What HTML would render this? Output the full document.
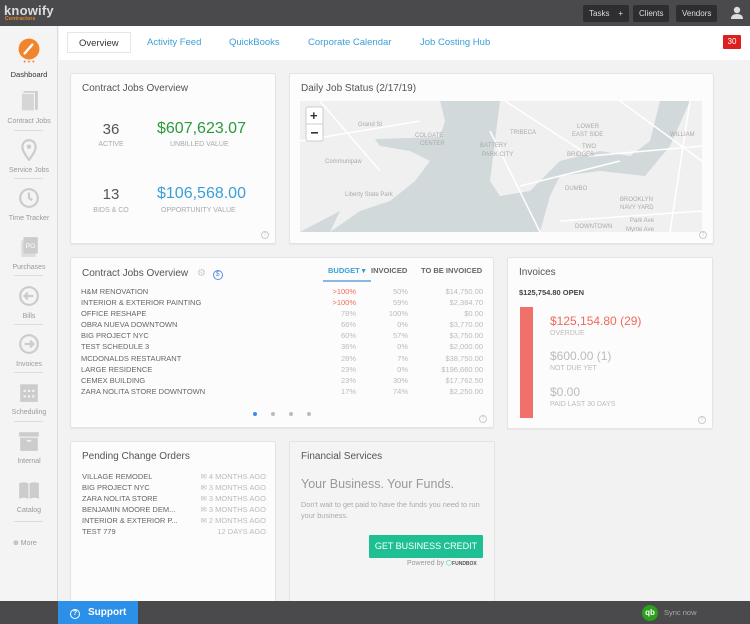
<!DOCTYPE html>
<html><head><meta charset="utf-8"><style>
*{box-sizing:border-box;margin:0;padding:0}
body{width:750px;height:624px;overflow:hidden;font-family:"Liberation Sans",sans-serif;background:#f2f2f2;position:relative;color:#555}
.top{position:absolute;left:0;top:0;width:750px;height:26px;background:#4a4a4c}
.logo{position:absolute;left:4px;top:3px;color:#ddd;font-size:13px;font-weight:bold;letter-spacing:.2px}
.logo small{position:absolute;left:1px;top:13px;font-size:5px;color:#e58a2a;font-weight:bold}
.tb{position:absolute;top:5px;height:17px;background:#2e2e30;color:#ddd;font-size:8px;line-height:17px;padding:0 6px;border-radius:2px;white-space:nowrap}
.side{position:absolute;left:0;top:26px;width:58px;height:575px;background:#f4f4f4;border-right:1px solid #ddd}
.si{position:absolute;left:0;width:58px;text-align:center;font-size:7px;color:#999}
.si .ic{display:block;margin:0 auto 6px;width:22px;height:22px}
.sep{position:absolute;left:14px;width:29px;height:1px;background:#ddd}
.tabs{position:absolute;left:59px;top:26px;width:691px;height:34px;background:#fff}
.tab{position:absolute;top:6px;height:21px;line-height:21px;font-size:9.5px;color:#3a9fd8}
.card{position:absolute;background:#fcfcfc;border:1px solid #e4e4e4;border-radius:2px;box-shadow:0 1px 1px rgba(0,0,0,.05)}
.ct{position:absolute;left:11px;top:9px;font-size:10px;color:#555}
.q{position:absolute;right:6px;bottom:4px;width:8px;height:8px;border:1px solid #ccc;border-radius:50%;font-size:5px;color:#ccc;text-align:center;line-height:6px}
.row{position:absolute;font-size:7.5px;color:#666;white-space:nowrap}
.g{color:#bbb}
.bot{position:absolute;left:0;top:601px;width:750px;height:23px;background:#4a4a4c}
</style></head><body>
<div class="top">
 <div class="logo">knowify<small>Contractors</small></div>
 <div class="tb" style="left:583px">Tasks &nbsp;&nbsp;&nbsp;+</div>
 <div class="tb" style="left:633px">Clients</div>
 <div class="tb" style="left:676px">Vendors</div>
 <svg style="position:absolute;left:731px;top:6px" width="12" height="13"><circle cx="6" cy="4" r="3.2" fill="#ddd"/><path d="M0 13 Q0 8 6 8 Q12 8 12 13Z" fill="#ddd"/></svg>
</div>
<div class="side">
 <div class="si" style="top:12px;color:#333"><svg class="ic" viewBox="0 0 20 20" style="width:22px;height:22px;margin-bottom:0"><circle cx="10" cy="10" r="9.5" fill="#f0852b"/><path d="M6 14 L13 6" stroke="#fff" stroke-width="2.2" stroke-linecap="round"/></svg>
 <div style="color:#f0852b;font-size:7px;line-height:6px">• • •</div><div style="margin-top:4px;font-size:7.5px">Dashboard</div></div>
 <div class="si" style="top:64px"><svg class="ic" viewBox="0 0 20 20"><rect x="5" y="1" width="13" height="17" fill="#ccc"/><rect x="3" y="3" width="12" height="16" fill="#d6d6d6" stroke="#f4f4f4"/></svg>Contract Jobs</div>
 <div class="sep" style="top:104px"></div>
 <div class="si" style="top:113px"><svg class="ic" viewBox="0 0 20 20"><path d="M10 19 C4 11 4 9 4 7 A6 6 0 0 1 16 7 C16 9 16 11 10 19Z" fill="none" stroke="#ccc" stroke-width="2"/><circle cx="10" cy="7" r="2" fill="#ccc"/></svg>Service Jobs</div>
 <div class="sep" style="top:152px"></div>
 <div class="si" style="top:161px"><svg class="ic" viewBox="0 0 20 20"><circle cx="10" cy="10" r="8" fill="none" stroke="#ccc" stroke-width="2"/><path d="M10 5V10L13 12" stroke="#ccc" stroke-width="2" fill="none"/></svg>Time Tracker</div>
 <div class="si" style="top:210px"><svg class="ic" viewBox="0 0 20 20"><rect x="3" y="4" width="13" height="15" fill="#ddd"/><rect x="5" y="1" width="13" height="15" fill="#ccc"/><text x="7" y="11" font-size="6" fill="#fff" font-family="Liberation Sans">PO</text></svg>Purchases</div>
 <div class="sep" style="top:249px"></div>
 <div class="si" style="top:259px"><svg class="ic" viewBox="0 0 20 20"><circle cx="10" cy="10" r="8" fill="none" stroke="#ccc" stroke-width="2"/><path d="M14 10H6M9 7L6 10L9 13" stroke="#ccc" stroke-width="2" fill="none"/></svg>Bills</div>
 <div class="sep" style="top:298px"></div>
 <div class="si" style="top:307px"><svg class="ic" viewBox="0 0 20 20"><circle cx="10" cy="10" r="8" fill="none" stroke="#ccc" stroke-width="2"/><path d="M6 10H14M11 7L14 10L11 13" stroke="#ccc" stroke-width="2" fill="none"/></svg>Invoices</div>
 <div class="sep" style="top:346px"></div>
 <div class="si" style="top:355px"><svg class="ic" viewBox="0 0 20 20"><rect x="2" y="3" width="16" height="16" fill="#ccc"/><g fill="#f4f4f4"><rect x="5" y="8" width="2" height="2"/><rect x="9" y="8" width="2" height="2"/><rect x="13" y="8" width="2" height="2"/><rect x="5" y="13" width="2" height="2"/><rect x="9" y="13" width="2" height="2"/><rect x="13" y="13" width="2" height="2"/></g></svg>Scheduling</div>
 <div class="sep" style="top:395px"></div>
 <div class="si" style="top:404px"><svg class="ic" viewBox="0 0 20 20"><rect x="1" y="2" width="18" height="4" fill="#ccc"/><rect x="2" y="7" width="16" height="12" fill="#ccc"/><rect x="8" y="9" width="4" height="1.5" fill="#f4f4f4"/></svg>Internal</div>
 <div class="si" style="top:453px"><svg class="ic" viewBox="0 0 20 20"><path d="M1 4Q5 2 9.5 4V18Q5 16 1 18Z M10.5 4Q15 2 19 4V18Q15 16 10.5 18Z" fill="#ccc"/></svg>Catalog</div>
 <div class="sep" style="top:495px"></div>
 <div class="si" style="top:513px;text-align:left;padding-left:13px">⊕ More</div>
</div>
<div class="tabs">
 <div class="tab" style="left:8px;border:1px solid #e6e6e6;color:#333;padding:0 11px">Overview</div>
 <div class="tab" style="left:88px">Activity Feed</div>
 <div class="tab" style="left:170px">QuickBooks</div>
 <div class="tab" style="left:249px">Corporate Calendar</div>
 <div class="tab" style="left:361px">Job Costing Hub</div>
 <div style="position:absolute;left:664px;top:9px;width:18px;height:14px;background:#dd1f1f;color:#fff;font-size:8px;text-align:center;line-height:14px;border-radius:1px">30</div>
</div>

<div class="card" style="left:70px;top:73px;width:206px;height:171px">
 <div class="ct">Contract Jobs Overview</div>
 <div style="position:absolute;left:0;width:80px;top:47px;text-align:center;font-size:15px;color:#555">36</div>
 <div style="position:absolute;left:0;width:80px;top:67px;text-align:center;font-size:7px;color:#aaa">ACTIVE</div>
 <div style="position:absolute;left:86px;top:46px;font-size:16px;color:#2a9a3a">$607,623.07</div>
 <div style="position:absolute;left:99px;top:67px;font-size:7px;color:#aaa">UNBILLED VALUE</div>
 <div style="position:absolute;left:0;width:80px;top:112px;text-align:center;font-size:15px;color:#555">13</div>
 <div style="position:absolute;left:0;width:80px;top:133px;text-align:center;font-size:7px;color:#aaa">BIDS &amp; CO</div>
 <div style="position:absolute;left:86px;top:111px;font-size:16px;color:#3a9fd8">$106,568.00</div>
 <div style="position:absolute;left:90px;top:133px;font-size:7px;color:#aaa">OPPORTUNITY VALUE</div>
 <div class="q">?</div>
</div>

<div class="card" style="left:289px;top:73px;width:425px;height:171px">
 <div class="ct">Daily Job Status (2/17/19)</div>
 <svg style="position:absolute;left:10px;top:27px" width="402" height="131" viewBox="0 0 402 131">
  <rect width="402" height="131" fill="#f0f0f0"/>
  <path d="M30 131 L60 110 L90 100 L115 80 L130 60 L110 50 L80 45 L75 38 L140 36 L145 20 L140 0 L200 0 L195 40 L190 80 L200 95 L230 90 L260 60 L300 50 L330 55 L350 40 L360 0 L390 0 L370 45 L345 75 L300 70 L260 75 L250 95 L240 131Z" fill="#d2d9da"/>
  <path d="M0 131 L40 110 L30 131Z" fill="#d2d9da"/>
  <g stroke="#fff" stroke-width="1.5" fill="none">
   <path d="M0 40 L120 20"/><path d="M20 0 L80 70"/><path d="M190 30 L240 131"/><path d="M205 0 L290 55 L402 45"/><path d="M320 0 L402 60"/><path d="M260 120 L402 110"/><path d="M390 0 L370 131"/><path d="M220 85 L320 60"/>
  </g>
  <g font-family="Liberation Sans" font-size="6" fill="#aaa">
   <text x="58" y="25">Grand St</text><text x="115" y="36">COLGATE</text><text x="120" y="44">CENTER</text>
   <text x="180" y="46">BATTERY</text><text x="182" y="55">PARK CITY</text><text x="210" y="33">TRIBECA</text>
   <text x="277" y="27">LOWER</text><text x="272" y="35">EAST SIDE</text><text x="282" y="47">TWO</text><text x="267" y="55">BRIDGES</text>
   <text x="370" y="35">WILLIAM</text><text x="25" y="62">Communipaw</text><text x="45" y="95">Liberty State Park</text>
   <text x="265" y="89">DUMBO</text><text x="320" y="100">BROOKLYN</text><text x="320" y="108">NAVY YARD</text>
   <text x="330" y="121">Park Ave</text><text x="275" y="127">DOWNTOWN</text><text x="326" y="130">Myrtle Ave</text>
  </g>
  <rect x="6" y="6" width="17" height="34" rx="2" fill="#fff" stroke="#ccc"/><line x1="6" y1="23" x2="23" y2="23" stroke="#ccc"/>
  <text x="10" y="19" font-size="13" font-weight="bold" fill="#333" font-family="Liberation Sans">+</text>
  <rect x="11" y="31" width="7" height="1.6" fill="#333"/>
 </svg>
 <div class="q">?</div>
</div>

<div class="card" style="left:70px;top:257px;width:424px;height:171px">
 <div class="ct" style="top:10px">Contract Jobs Overview <span style="color:#ccc;margin-left:6px">⚙</span> <span style="display:inline-block;width:10px;height:10px;border:1px solid #5a8fe0;border-radius:50%;color:#5a8fe0;font-size:7px;text-align:center;line-height:8px;margin-left:4px">$</span></div>
 <div class="row" style="left:252px;top:8px;color:#3a9fd8;font-weight:bold;font-size:7.5px;border-bottom:2px solid #8ab8e0;padding:0 5px 5px">BUDGET ▾</div>
 <div class="row" style="left:300px;top:8px;font-weight:bold;font-size:7.5px;color:#666">INVOICED</div>
 <div class="row" style="left:350px;top:8px;font-weight:bold;font-size:7.5px;color:#666">TO BE INVOICED</div>
 <div style="position:absolute;left:10px;top:28px;width:402px;font-size:7.5px;line-height:11.1px;color:#666">
  <div style="position:relative">
  <div>H&amp;M RENOVATION</div><div>INTERIOR &amp; EXTERIOR PAINTING</div><div>OFFICE RESHAPE</div><div>OBRA NUEVA DOWNTOWN</div><div>BIG PROJECT NYC</div><div>TEST SCHEDULE 3</div><div>MCDONALDS RESTAURANT</div><div>LARGE RESIDENCE</div><div>CEMEX BUILDING</div><div>ZARA NOLITA STORE DOWNTOWN</div>
  <div style="position:absolute;right:127px;top:0;text-align:right;color:#bbb"><div style="color:#f06a5a">&gt;100%</div><div style="color:#f06a5a">&gt;100%</div><div>78%</div><div>66%</div><div>60%</div><div>36%</div><div>28%</div><div>23%</div><div>23%</div><div>17%</div></div>
  <div style="position:absolute;right:75px;top:0;text-align:right;color:#bbb"><div>50%</div><div>59%</div><div>100%</div><div>0%</div><div>57%</div><div>0%</div><div>7%</div><div>0%</div><div>30%</div><div>74%</div></div>
  <div style="position:absolute;right:0;top:0;text-align:right;color:#bbb"><div>$14,750.00</div><div>$2,384.70</div><div>$0.00</div><div>$3,770.00</div><div>$3,750.00</div><div>$2,000.00</div><div>$38,750.00</div><div>$196,660.00</div><div>$17,762.50</div><div>$2,250.00</div></div>
  </div>
 </div>
 <div style="position:absolute;left:182px;top:154px;width:4px;height:4px;border-radius:50%;background:#3a8ee0"></div>
 <div style="position:absolute;left:200px;top:154px;width:4px;height:4px;border-radius:50%;background:#bbb"></div>
 <div style="position:absolute;left:218px;top:154px;width:4px;height:4px;border-radius:50%;background:#bbb"></div>
 <div style="position:absolute;left:236px;top:154px;width:4px;height:4px;border-radius:50%;background:#bbb"></div>
 <div class="q">?</div>
</div>

<div class="card" style="left:507px;top:257px;width:206px;height:172px">
 <div class="ct">Invoices</div>
 <div style="position:absolute;left:11px;top:30px;font-size:7.5px;font-weight:bold;color:#444">$125,754.80 OPEN</div>
 <div style="position:absolute;left:12px;top:49px;width:13px;height:111px;background:#f2706a"></div>
 <div style="position:absolute;left:42px;top:56px;font-size:12px;color:#f06a5a">$125,154.80 (29)</div>
 <div style="position:absolute;left:42px;top:72px;font-size:7px;color:#bbb">OVERDUE</div>
 <div style="position:absolute;left:42px;top:91px;font-size:12px;color:#bbb">$600.00 (1)</div>
 <div style="position:absolute;left:42px;top:107px;font-size:7px;color:#bbb">NOT DUE YET</div>
 <div style="position:absolute;left:42px;top:127px;font-size:12px;color:#bbb">$0.00</div>
 <div style="position:absolute;left:42px;top:143px;font-size:7px;color:#bbb">PAID LAST 30 DAYS</div>
 <div class="q">?</div>
</div>

<div class="card" style="left:70px;top:441px;width:206px;height:165px">
 <div class="ct">Pending Change Orders</div>
 <div style="position:absolute;left:11px;top:29px;width:184px;font-size:7.5px;line-height:11.1px;color:#666">
  <div>VILLAGE REMODEL<span style="float:right" class="g">✉ 4 MONTHS AGO</span></div>
  <div>BIG PROJECT NYC<span style="float:right" class="g">✉ 3 MONTHS AGO</span></div>
  <div>ZARA NOLITA STORE<span style="float:right" class="g">✉ 3 MONTHS AGO</span></div>
  <div>BENJAMIN MOORE DEM...<span style="float:right" class="g">✉ 3 MONTHS AGO</span></div>
  <div>INTERIOR &amp; EXTERIOR P...<span style="float:right" class="g">✉ 2 MONTHS AGO</span></div>
  <div>TEST 779<span style="float:right" class="g">12 DAYS AGO</span></div>
 </div>
</div>

<div class="card" style="left:289px;top:441px;width:206px;height:165px;background:#f4f4f4">
 <div class="ct" style="top:9px">Financial Services</div>
 <div style="position:absolute;left:11px;top:35px;font-size:12.5px;color:#999">Your Business. Your Funds.</div>
 <div style="position:absolute;left:11px;top:57px;width:190px;font-size:7.3px;line-height:11px;color:#aaa">Don't wait to get paid to have the funds you need to run your business.</div>
 <div style="position:absolute;left:79px;top:93px;width:114px;height:23px;background:#1fbf94;color:#fff;font-size:9px;text-align:center;line-height:23px;border-radius:1px">GET BUSINESS CREDIT</div>
 <div style="position:absolute;left:117px;top:117px;font-size:7px;color:#999">Powered by <span style="color:#1fbf94">⬡</span><b style="font-size:5px;color:#555">FUNDBOX</b></div>
</div>

<div class="bot">
 <div style="position:absolute;left:58px;top:0;width:80px;height:23px;background:#2c8fe8;color:#fff;font-size:10px;font-weight:bold;line-height:23px;padding-left:12px"><span style="display:inline-block;width:10px;height:10px;border:1.3px solid #fff;border-radius:50%;font-size:7px;text-align:center;line-height:8px;margin-right:8px">?</span>Support</div>
 <div style="position:absolute;left:642px;top:4px;width:16px;height:16px;border-radius:50%;background:#2ca01c;color:#fff;font-size:8px;text-align:center;line-height:16px;font-weight:bold">qb</div>
 <div style="position:absolute;left:664px;top:7px;font-size:7.5px;color:#aaa">Sync now</div>
</div>
</body></html>
